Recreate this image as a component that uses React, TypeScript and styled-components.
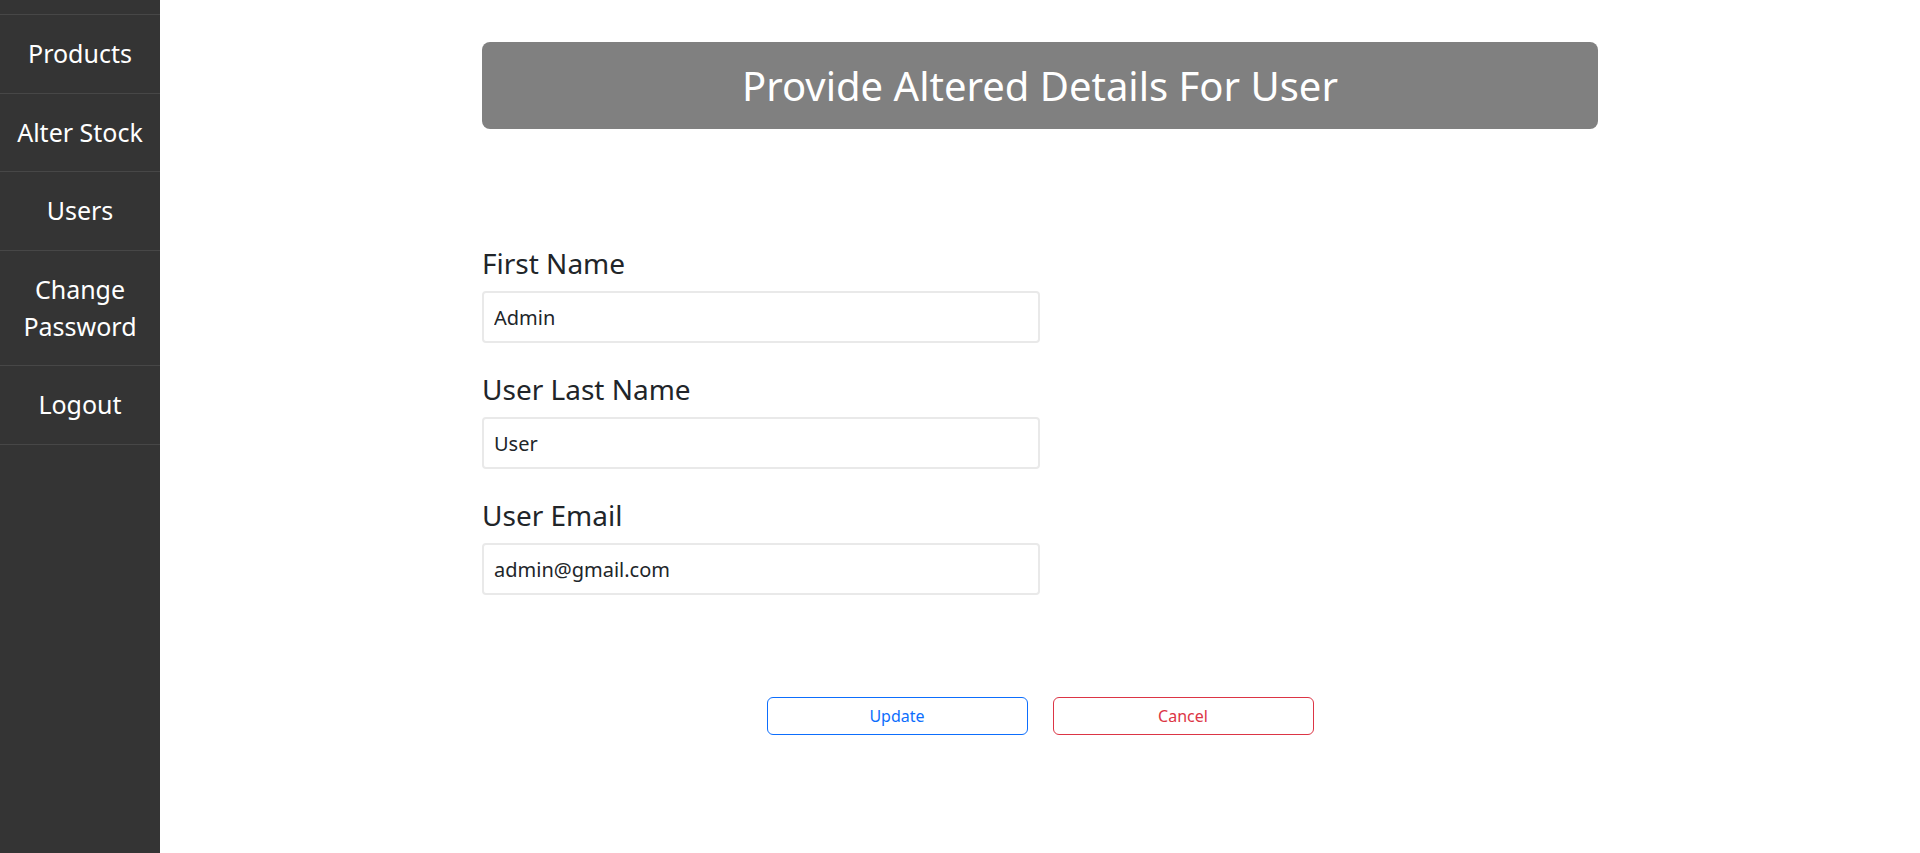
import React from "react";
import styled, { createGlobalStyle } from "styled-components";

const GlobalStyle = createGlobalStyle`
  html, body {
    margin: 0;
    padding: 0;
    height: 100%;
    background: #ffffff;
    font-family: "Noto Sans", "Open Sans", sans-serif;
    color: #212529;
  }
  * { box-sizing: border-box; }
  #root { height: 100%; }
`;

const Layout = styled.div`
  display: flex;
  min-height: 100vh;
`;

const Sidebar = styled.nav`
  width: 160px;
  flex-shrink: 0;
  background: #343434;
  padding-top: 14px;
`;

const NavList = styled.ul`
  list-style: none;
  margin: 0;
  padding: 0;
  border-top: 1px solid #474747;
`;

const NavItem = styled.li`
  padding: 20px 4px 20.5px;
  border-bottom: 1px solid #474747;
  color: #ffffff;
  font-size: 25px;
  line-height: 37px;
  text-align: center;
  white-space: nowrap;
  cursor: pointer;
`;

const Main = styled.main`
  flex: 1;
  display: flex;
  justify-content: center;
  padding-top: 42px;
`;

const Container = styled.div`
  width: 1116px;
  display: flex;
  flex-direction: column;
`;

const TitleBar = styled.div`
  height: 87px;
  background: #808080;
  border-radius: 8px;
  display: flex;
  align-items: center;
  justify-content: center;
`;

const Title = styled.h1`
  margin: 0;
  color: #ffffff;
  font-size: 40px;
  font-weight: 400;
  line-height: 48px;
`;

const Form = styled.form`
  margin-top: 113px;
  width: 558px;
  display: flex;
  flex-direction: column;
  gap: 25px;
`;

const Field = styled.div`
  display: flex;
  flex-direction: column;
`;

const Label = styled.label`
  font-size: 28px;
  line-height: 42px;
  margin-bottom: 7px;
  color: #212529;
`;

const Input = styled.input`
  height: 52px;
  padding: 10px;
  font-family: "Noto Sans", "Open Sans", sans-serif;
  font-size: 20px;
  line-height: 30px;
  color: #212529;
  border: 2px solid #e9e9e9;
  border-radius: 4px;
  outline: none;
  background: #ffffff;
`;

const Actions = styled.div`
  margin-top: 102px;
  display: flex;
  justify-content: center;
  gap: 25px;
`;

const OutlineButton = styled.button<{ $tone: string }>`
  width: 261px;
  height: 38px;
  background: #ffffff;
  border: 1px solid ${(p) => p.$tone};
  color: ${(p) => p.$tone};
  border-radius: 6px;
  font-family: "Noto Sans", "Open Sans", sans-serif;
  font-size: 16px;
  line-height: 24px;
  cursor: pointer;
`;

const navItems = ["Products", "Alter Stock", "Users", "Change Password", "Logout"];

const fields = [
  { id: "first", label: "First Name", value: "Admin" },
  { id: "last", label: "User Last Name", value: "User" },
  { id: "email", label: "User Email", value: "admin@gmail.com" },
];

export default function App() {
  return (
    <>
      <GlobalStyle />
      <Layout>
        <Sidebar>
          <NavList>
            {navItems.map((item) => (
              <NavItem key={item}>
                {item === "Change Password" ? (
                  <>
                    Change
                    <br />
                    Password
                  </>
                ) : (
                  item
                )}
              </NavItem>
            ))}
          </NavList>
        </Sidebar>
        <Main>
          <Container>
            <TitleBar>
              <Title>Provide Altered Details For User</Title>
            </TitleBar>
            <Form onSubmit={(e) => e.preventDefault()}>
              {fields.map((f) => (
                <Field key={f.id}>
                  <Label htmlFor={f.id}>{f.label}</Label>
                  <Input id={f.id} defaultValue={f.value} />
                </Field>
              ))}
            </Form>
            <Actions>
              <OutlineButton type="button" $tone="#0d6efd">
                Update
              </OutlineButton>
              <OutlineButton type="button" $tone="#dc3545">
                Cancel
              </OutlineButton>
            </Actions>
          </Container>
        </Main>
      </Layout>
    </>
  );
}
